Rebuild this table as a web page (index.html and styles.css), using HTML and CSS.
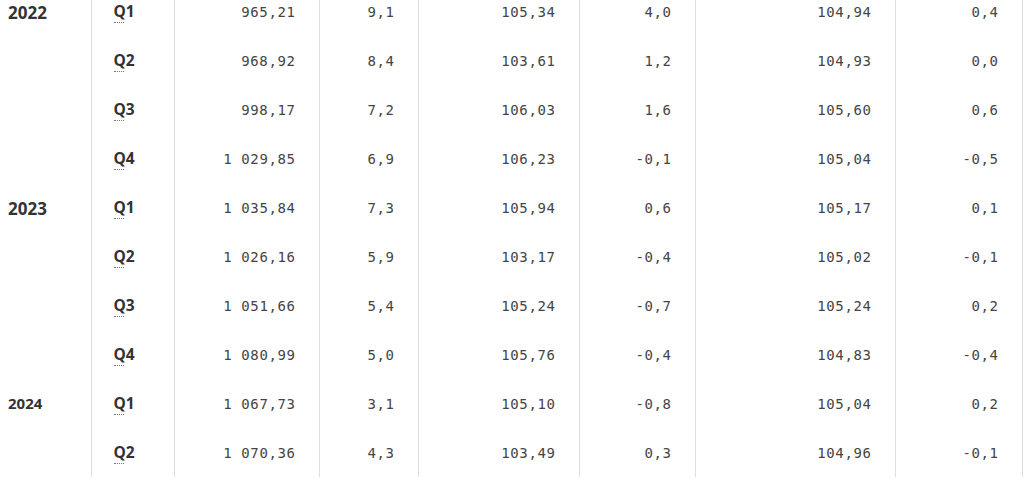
FILE: index.html
```html
<!DOCTYPE html>
<html lang="fi">
<head>
<meta charset="utf-8">
<title>Taulukko</title>
<link rel="stylesheet" href="styles.css">
</head>
<body>
<div class="wrap">
<table class="data">
<colgroup>
<col class="c-year"><col class="c-q"><col class="c-a"><col class="c-b"><col class="c-c"><col class="c-d"><col class="c-e"><col class="c-f">
</colgroup>
<tbody>
<tr><th class="year" rowspan="4">2022</th><th class="q"><span class="ql">Q1<i class="dots"></i></span></th><td>965,21</td><td>9,1</td><td>105,34</td><td>4,0</td><td>104,94</td><td>0,4</td></tr>
<tr><th class="q"><span class="ql">Q2<i class="dots"></i></span></th><td>968,92</td><td>8,4</td><td>103,61</td><td>1,2</td><td>104,93</td><td>0,0</td></tr>
<tr><th class="q"><span class="ql">Q3<i class="dots"></i></span></th><td>998,17</td><td>7,2</td><td>106,03</td><td>1,6</td><td>105,60</td><td>0,6</td></tr>
<tr><th class="q"><span class="ql">Q4<i class="dots"></i></span></th><td>1 029,85</td><td>6,9</td><td>106,23</td><td>-0,1</td><td>105,04</td><td>-0,5</td></tr>
<tr><th class="year" rowspan="4">2023</th><th class="q"><span class="ql">Q1<i class="dots"></i></span></th><td>1 035,84</td><td>7,3</td><td>105,94</td><td>0,6</td><td>105,17</td><td>0,1</td></tr>
<tr><th class="q"><span class="ql">Q2<i class="dots"></i></span></th><td>1 026,16</td><td>5,9</td><td>103,17</td><td>-0,4</td><td>105,02</td><td>-0,1</td></tr>
<tr><th class="q"><span class="ql">Q3<i class="dots"></i></span></th><td>1 051,66</td><td>5,4</td><td>105,24</td><td>-0,7</td><td>105,24</td><td>0,2</td></tr>
<tr><th class="q"><span class="ql">Q4<i class="dots"></i></span></th><td>1 080,99</td><td>5,0</td><td>105,76</td><td>-0,4</td><td>104,83</td><td>-0,4</td></tr>
<tr><th class="year small" rowspan="2">2024</th><th class="q"><span class="ql">Q1<i class="dots"></i></span></th><td>1 067,73</td><td>3,1</td><td>105,10</td><td>-0,8</td><td>105,04</td><td>0,2</td></tr>
<tr><th class="q"><span class="ql">Q2<i class="dots"></i></span></th><td>1 070,36</td><td>4,3</td><td>103,49</td><td>0,3</td><td>104,96</td><td>-0,1</td></tr>
</tbody>
</table>
</div>
</body>
</html>
```

FILE: styles.css
```css
html, body {
  margin: 0;
  padding: 0;
  background: #fff;
}
body {
  font-family: "Open Sans", "Liberation Sans", sans-serif;
  color: #333;
  overflow: hidden;
}
.wrap {
  margin-top: -13px;
}
.data {
  border-collapse: collapse;
  table-layout: fixed;
  width: 1022px;
}
.c-year { width: 91px; }
.c-q { width: 83px; }
.c-a { width: 145px; }
.c-b { width: 99px; }
.c-c { width: 161px; }
.c-d { width: 116px; }
.c-e { width: 200px; }
.c-f { width: 127px; }

.data tr { height: 49px; }
.data th, .data td {
  vertical-align: top;
  padding: 15px 23px 0 0;
  line-height: 20px;
  height: 49px;
  box-sizing: border-box;
}
.data td {
  text-align: right;
  font-family: "DejaVu Sans Mono", "Liberation Mono", monospace;
  font-size: 14px;
  letter-spacing: 0.6px;
  color: #444;
  border-left: 1px solid #dcdcdc;
}
.data td:last-child {
  border-right: 1px solid #dcdcdc;
}
.year {
  text-align: left;
  padding: 16px 0 0 8px !important;
  font-size: 17px;
  font-weight: 700;
  color: #333;
}
.year.small {
  font-size: 15px;
  padding-top: 14px !important;
}
.q {
  text-align: left;
  padding: 14px 0 0 22px !important;
  font-size: 15.5px;
  font-weight: 700;
  color: #333;
  border-left: 1px solid #dcdcdc;
}
.ql {
  display: inline-flex;
  flex-direction: column;
  align-items: flex-start;
}
.dots {
  display: block;
  width: 10px;
  height: 0;
  margin-top: 1px;
  border-top: 1px dotted #777;
}
```
